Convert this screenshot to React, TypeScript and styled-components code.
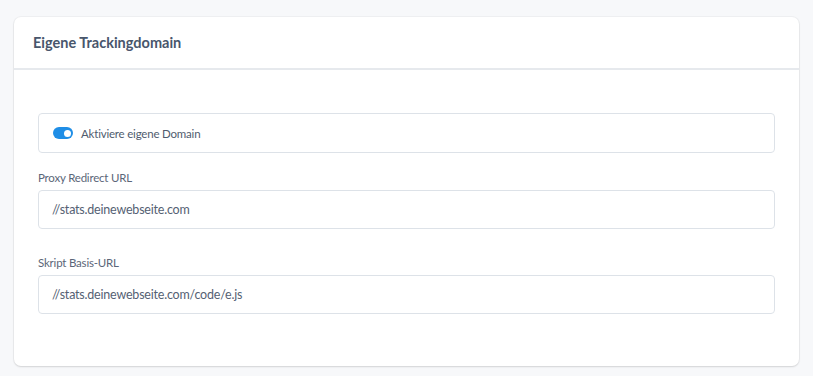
import React, { useState } from "react"
import styled, { createGlobalStyle } from 'styled-components'

const GlobalStyle = createGlobalStyle`
    html, body {
        margin: 0;
        padding: 0;
        background: #f7f8fa;
        font-family: "Source Sans Pro", Lato, "Noto Sans", sans-serif;
    }
`

const Page = styled.div`
    padding: 17px 14px 11px 14px;
`

const Card = styled.section`
    background: #ffffff;
    border-radius: 7px;
    box-shadow: 0 1px 2px rgba(0, 0, 0, 0.12), 0 0 0 1px rgba(0, 0, 0, 0.03);
    overflow: hidden;
`

const CardHeader = styled.header`
    height: 51px;
    display: flex;
    align-items: center;
    padding: 0 19px;
    border-bottom: 2px solid #e6e9ed;
`

const Title = styled.h2`
    margin: 0;
    font-size: 14.5px;
    font-weight: 700;
    color: #48566c;
`

const CardBody = styled.div`
    padding: 43px 24px 52px 24px;
    display: flex;
    flex-direction: column;
`

const ToggleBox = styled.label`
    height: 38px;
    display: flex;
    align-items: center;
    gap: 8px;
    padding: 0 14px;
    border: 1px solid #dde2e8;
    border-radius: 4px;
    font-size: 11.5px;
    letter-spacing: -0.2px;
    color: #505c6e;
    cursor: pointer;
`

const Switch = styled.span<{ on: boolean }>`
    position: relative;
    width: 20px;
    height: 12px;
    border-radius: 6px;
    background: ${({ on }) => on ? '#1f8ee6' : '#c6ccd4'};
    flex-shrink: 0;

    &::after {
        content: '';
        position: absolute;
        top: 2.5px;
        left: ${({ on }) => on ? '10.5px' : '2.5px'};
        width: 7px;
        height: 7px;
        border-radius: 50%;
        background: #ffffff;
    }
`

const Field = styled.div<{ spaced?: boolean }>`
    display: flex;
    flex-direction: column;
    margin-top: ${({ spaced }) => spaced ? '27px' : '18px'};
`

const FieldLabel = styled.div`
    font-size: 11.5px;
    letter-spacing: -0.2px;
    color: #5b6678;
    margin-bottom: 6px;
`

const TextInput = styled.input`
    height: 39px;
    box-sizing: border-box;
    border: 1px solid #dde2e8;
    border-radius: 4px;
    padding: 0 13px;
    font-family: inherit;
    font-size: 12.5px;
    letter-spacing: -0.2px;
    color: #556173;
    outline: none;
    background: #ffffff;
`

export default function App() {
    const [ enabled, setEnabled ] = useState(true)
    const [ proxyUrl, setProxyUrl ] = useState('//stats.deinewebseite.com')
    const [ scriptUrl, setScriptUrl ] = useState('//stats.deinewebseite.com/code/e.js')

    return (
        <>
            <GlobalStyle />
            <Page>
                <Card>
                    <CardHeader>
                        <Title>Eigene Trackingdomain</Title>
                    </CardHeader>

                    <CardBody>
                        <ToggleBox onClick={() => setEnabled(prev => !prev)}>
                            <Switch on={ enabled } />
                            Aktiviere eigene Domain
                        </ToggleBox>

                        <Field>
                            <FieldLabel>Proxy Redirect URL</FieldLabel>
                            <TextInput value={ proxyUrl } onChange={e => setProxyUrl(e.target.value)} />
                        </Field>

                        <Field spaced>
                            <FieldLabel>Skript Basis-URL</FieldLabel>
                            <TextInput value={ scriptUrl } onChange={e => setScriptUrl(e.target.value)} />
                        </Field>
                    </CardBody>
                </Card>
            </Page>
        </>
    )
}
